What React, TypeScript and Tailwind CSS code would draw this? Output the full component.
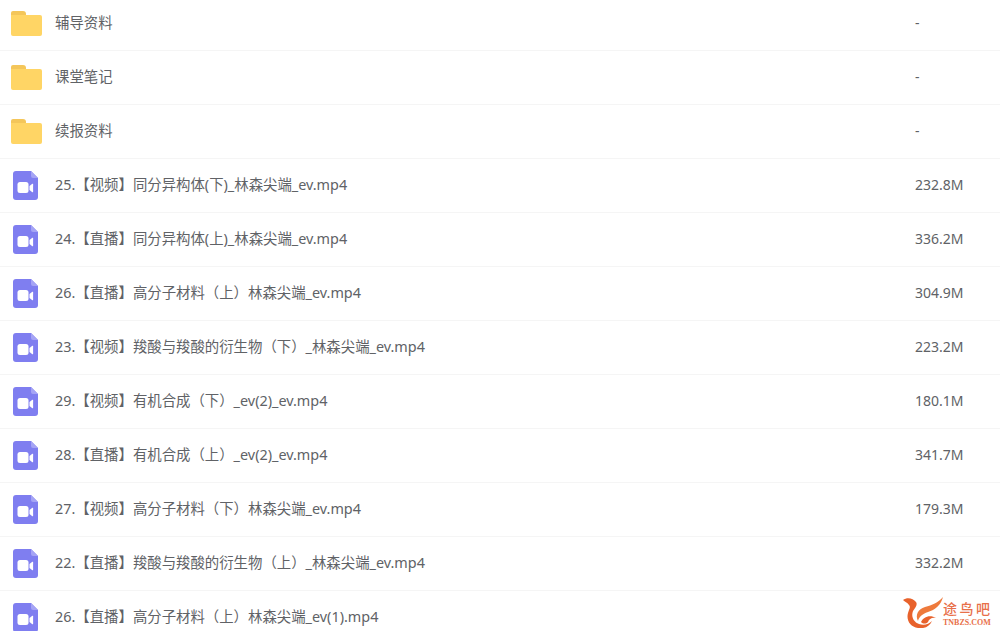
const files = [
  { name: '辅导资料', size: '-', kind: 'folder' },
  { name: '课堂笔记', size: '-', kind: 'folder' },
  { name: '续报资料', size: '-', kind: 'folder' },
  { name: '25.【视频】同分异构体(下)_林森尖端_ev.mp4', size: '232.8M', kind: 'video' },
  { name: '24.【直播】同分异构体(上)_林森尖端_ev.mp4', size: '336.2M', kind: 'video' },
  { name: '26.【直播】高分子材料（上）林森尖端_ev.mp4', size: '304.9M', kind: 'video' },
  { name: '23.【视频】羧酸与羧酸的衍生物（下）_林森尖端_ev.mp4', size: '223.2M', kind: 'video' },
  { name: '29.【视频】有机合成（下）_ev(2)_ev.mp4', size: '180.1M', kind: 'video' },
  { name: '28.【直播】有机合成（上）_ev(2)_ev.mp4', size: '341.7M', kind: 'video' },
  { name: '27.【视频】高分子材料（下）林森尖端_ev.mp4', size: '179.3M', kind: 'video' },
  { name: '22.【直播】羧酸与羧酸的衍生物（上）_林森尖端_ev.mp4', size: '332.2M', kind: 'video' },
  { name: '26.【直播】高分子材料（上）林森尖端_ev(1).mp4', size: '', kind: 'video' },
];

function FolderIcon() {
  return (
    <svg width="31" height="25" viewBox="0 0 31 25">
      <path d="M0 2a2 2 0 0 1 2-2h10a3 3 0 0 1 3 3v2H0z" fill="#f4c65a" />
      <path d="M0 4h29a2 2 0 0 1 2 2v17a2 2 0 0 1-2 2H2a2 2 0 0 1-2-2z" fill="#ffd565" />
    </svg>
  );
}

function VideoIcon() {
  return (
    <svg width="25" height="29" viewBox="0 0 25 29">
      <path d="M3 0h15l7 7v19a3 3 0 0 1-3 3H3a3 3 0 0 1-3-3V3a3 3 0 0 1 3-3z" fill="#7f7ef0" />
      <path d="M18 0l7 7h-5a2 2 0 0 1-2-2z" fill="#a5a4f5" />
      <rect x="4.5" y="11" width="11" height="11" rx="2.5" fill="#fff" />
      <path d="M16.5 15l2.8-2.2a.5.5 0 0 1 .8.4v7.6a.5.5 0 0 1-.8.4L16.5 19z" fill="#fff" />
    </svg>
  );
}

function Watermark() {
  return (
    <div className="absolute right-[10px] bottom-[3px] flex items-end whitespace-nowrap">
      <svg width="40" height="31" viewBox="0 0 40 31" className="shrink-0">
        <path d="M0 3C4 0 10 1 13 5c2 3-1 6-3 9-2 5 0 11 6 13 5 2 10 0 13-3-2 5-7 8-14 7C7 30 3 23 5 16c1-4 3-6 1-8C4 5 2 5 0 3z" fill="#e8622c" />
        <path d="M40 0c-2 8-8 13-15 15-6 2-9 5-10 9-3-6 0-12 7-14 7-2 13-4 18-10z" fill="#ee7a3c" />
        <path d="M18 25c2-5 9-8 15-4-4-1-7 1-8 4-2 2-5 2-7 0z" fill="#e8622c" />
      </svg>
      <div className="flex w-[47px] flex-col pb-[1px] text-[#e8704a]">
        <span className="font-['Noto_Sans_CJK_SC',sans-serif] text-[14px] leading-[20px] font-medium tracking-[2.5px]">途鸟吧</span>
        <span className="font-['Liberation_Serif',serif] text-[8px] leading-[9px] font-bold">TNBZS.COM</span>
      </div>
    </div>
  );
}

export default function App() {
  return (
    <div className="relative h-[631px] w-[1000px] overflow-hidden bg-white font-['Noto_Sans','Noto_Sans_CJK_SC',sans-serif] text-[#606266]">
      <div className="-mt-[3px]">
        {files.map((file, i) => (
          <div key={i} className="flex h-[54px] items-center border-b border-[#f5f5f5]">
            <div className="flex w-[55px] shrink-0 items-center justify-center">
              <div className={file.kind === 'folder' ? 'mr-[3px]' : 'mr-[5px]'}>
                {file.kind === 'folder' ? <FolderIcon /> : <VideoIcon />}
              </div>
            </div>
            <div className="-mt-[1px] flex-1 text-[14.4px]">{file.name}</div>
            {file.size && <div className="-mt-[1px] w-[85px] shrink-0 text-sm">{file.size}</div>}
          </div>
        ))}
      </div>
      <Watermark />
    </div>
  );
}
